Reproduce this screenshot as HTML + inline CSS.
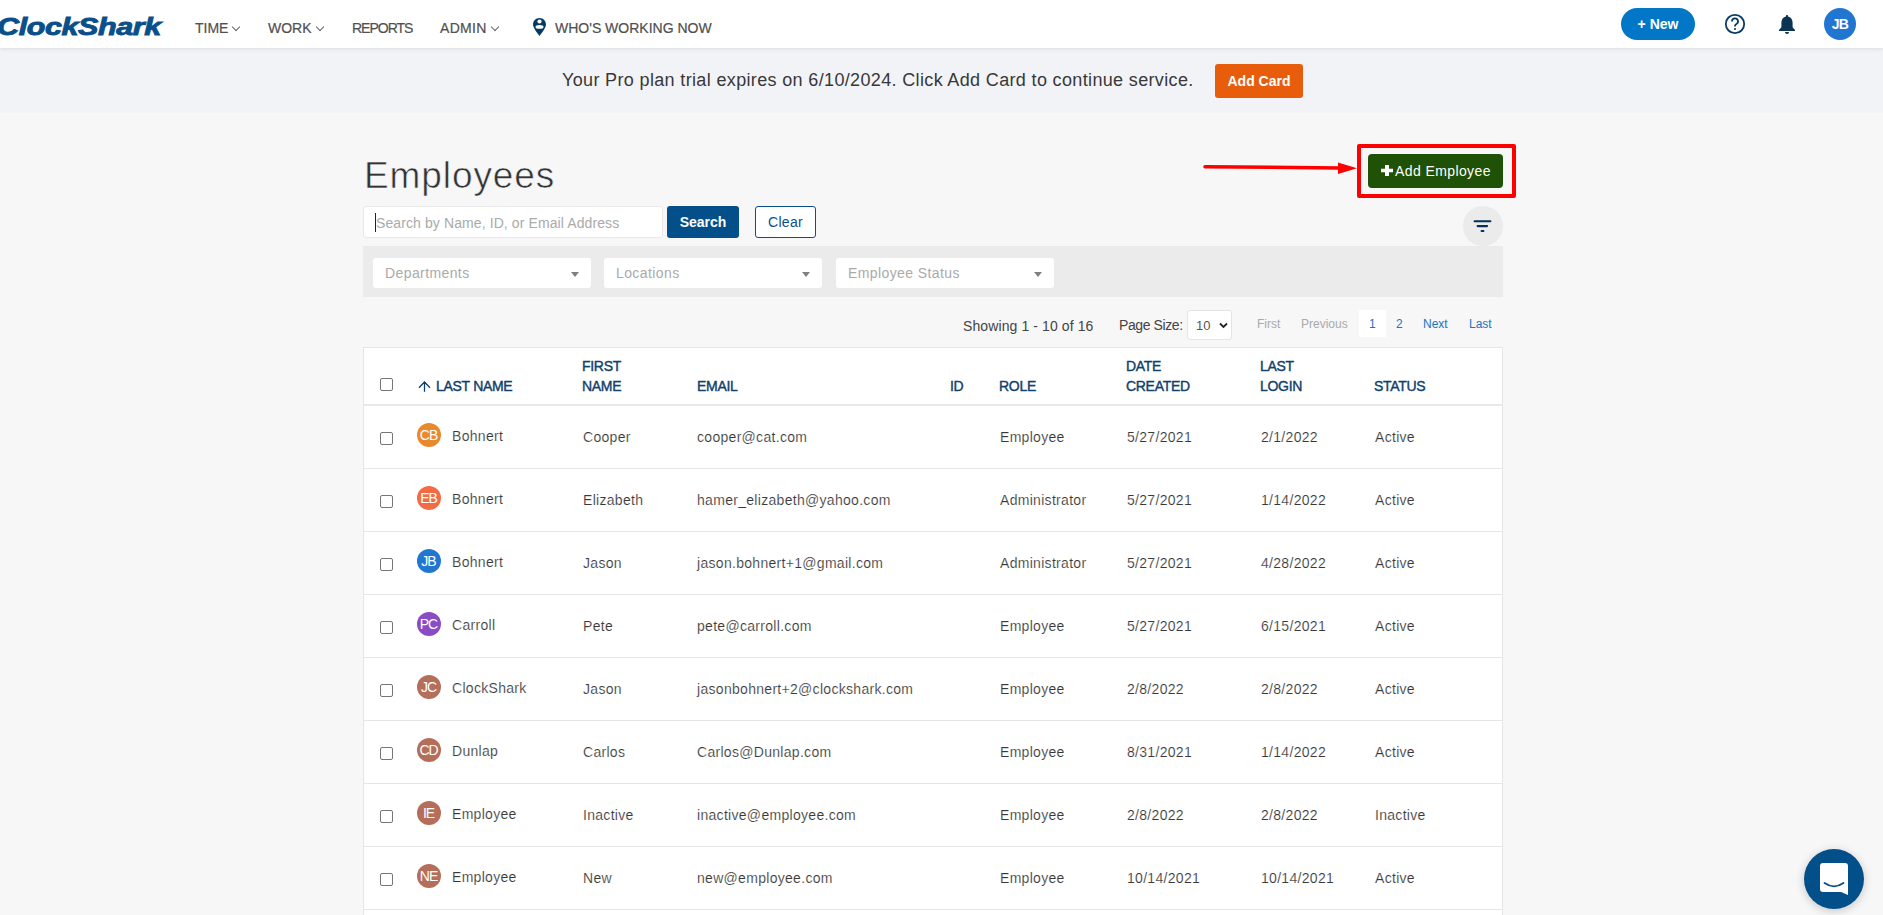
<!DOCTYPE html>
<html><head><meta charset="utf-8">
<style>
*{box-sizing:border-box;margin:0;padding:0}
html,body{width:1883px;height:915px;overflow:hidden}
body{position:relative;background:#f7f7f7;font-family:"Liberation Sans",sans-serif;color:#333}
.abs{position:absolute}
#hdr{position:absolute;left:0;top:0;width:1883px;height:48px;background:#fff;box-shadow:0 1px 4px rgba(0,0,0,.10);z-index:2}
.logo{position:absolute;left:-3px;top:12px;font-weight:bold;font-style:italic;font-size:24px;line-height:29px;color:#0b4f8a;letter-spacing:-0.3px;transform-origin:0 0;transform:scaleX(1.27);-webkit-text-stroke:0.9px #0b4f8a}
.nav{position:absolute;top:19.5px;font-size:14px;color:#505050;white-space:nowrap;line-height:17px;-webkit-text-stroke:0.2px #505050}
.chev{display:inline-block;width:6px;height:6px;border-right:1.2px solid #666;border-bottom:1.2px solid #666;transform:rotate(45deg);margin-left:5px;position:relative;top:-3px}
#banner{position:absolute;left:0;top:48px;width:1883px;height:65px;background:#f2f3f7}
.btxt{position:absolute;left:562px;top:69px;font-size:18px;color:#383838;white-space:nowrap;line-height:22px;letter-spacing:0.35px}
.addcard{position:absolute;left:1215px;top:64px;width:88px;height:34px;background:#e85d0c;border-radius:3px;color:#fff;font-weight:bold;font-size:14px;line-height:34px;text-align:center}
h1{position:absolute;left:364px;top:154px;font-weight:normal;font-size:37px;color:#333;letter-spacing:0.9px;line-height:44px;-webkit-text-stroke:0.6px #f7f7f7}
.inp{position:absolute;left:363px;top:206px;width:300px;height:32px;background:#fff;border:1px solid #e9e9e9;border-radius:3px}
.ph{position:absolute;left:12px;top:8px;font-size:14px;color:#aaa;line-height:17px;white-space:nowrap;letter-spacing:0.1px}
.caret{position:absolute;left:11px;top:6px;width:1px;height:19px;background:#222}
.sbtn{position:absolute;left:667px;top:206px;width:72px;height:32px;background:#034f8a;border-radius:3px;color:#fff;font-weight:bold;font-size:14px;line-height:33px;text-align:center}
.cbtn{position:absolute;left:755px;top:206px;width:61px;height:32px;background:#fff;border:1.3px solid #0b4f8a;border-radius:3px;color:#0b4f8a;font-size:14px;line-height:31px;text-align:center;letter-spacing:0.3px}
.addemp{position:absolute;left:1368px;top:154px;width:135px;height:34px;background:#1f5106;border-radius:4px;color:#fff;font-size:14px;line-height:34px;text-align:center;white-space:nowrap}
.redbox{position:absolute;left:1357px;top:144px;width:159px;height:54px;border:4px solid #f00;border-radius:2px}
.fcircle{position:absolute;left:1463px;top:206px;width:40px;height:40px;border-radius:50%;background:#ebebeb}
.fbar{position:absolute;left:363px;top:246px;width:1140px;height:51px;background:#ebebeb}
.dd{position:absolute;top:258px;width:218px;height:30px;background:#fff;border-radius:3px}
.dd span{position:absolute;left:12px;top:7px;font-size:14px;color:#aaa;line-height:17px;white-space:nowrap;letter-spacing:0.4px}
.dd i{position:absolute;right:12px;top:14px;width:0;height:0;border-left:4px solid transparent;border-right:4px solid transparent;border-top:5px solid #808080}
.pg{position:absolute;font-size:14px;color:#444;line-height:17px;white-space:nowrap}
.sel{position:absolute;left:1187px;top:310px;width:45px;height:30px;background:#fff;border:1px solid #e4e4e4;border-radius:3px}
.pl{position:absolute;top:317px;font-size:12px;line-height:15px;white-space:nowrap}
.tbl{position:absolute;left:363px;top:347px;width:1140px;height:600px;background:#fff;border:1px solid #e6e6e6}
.th{position:absolute;font-size:14px;font-weight:normal;color:#10406c;line-height:20px;white-space:nowrap;letter-spacing:-0.3px;-webkit-text-stroke:0.4px #10406c}
.hline{position:absolute;left:364px;width:1138px;height:1px;background:#e6e6e6}
.cb{position:absolute;left:380px;width:13px;height:13px;border:1px solid #767676;border-radius:2px;background:#fff}
.av{position:absolute;left:417px;width:24px;height:24px;border-radius:50%;color:#fff;font-size:14px;line-height:24px;text-align:center;letter-spacing:-1px;text-indent:-1px}
.td{position:absolute;font-size:14px;color:#383838;line-height:17px;white-space:nowrap;letter-spacing:0.3px;-webkit-text-stroke:0.15px #fff}
.chat{position:absolute;left:1804px;top:849px;width:60px;height:60px;border-radius:50%;background:#034f8a;box-shadow:0 2px 10px rgba(0,0,0,.2)}
</style></head>
<body>
<div id="hdr">
  <div class="logo">ClockShark</div>
  <div class="nav" style="left:195px">TIME<span class="chev"></span></div>
  <div class="nav" style="left:268px">WORK<span class="chev"></span></div>
  <div class="nav" style="left:352px;letter-spacing:-1px">REPORTS</div>
  <div class="nav" style="left:440px;letter-spacing:0.3px">ADMIN<span class="chev"></span></div>
  <svg class="abs" style="left:533px;top:18px" width="13" height="18" viewBox="0 0 13 18"><path d="M6.5 0C2.9 0 0 2.9 0 6.5c0 3.3 4.4 8.7 6.5 11.5C8.6 15.200 13 9.800 13 6.5 13 2.9 10.1 0 6.5 0z" fill="#063a66"/><circle cx="6.5" cy="3.500" r="2.100" fill="#fff"/><ellipse cx="6.5" cy="8.900" rx="4" ry="1.900" fill="#fff"/></svg>
  <div class="nav" style="left:555px">WHO'S WORKING NOW</div>
  <div class="abs" style="left:1621px;top:8px;width:74px;height:32px;border-radius:16px;background:#0277c8;color:#fff;font-weight:bold;font-size:14px;line-height:32px;text-align:center">+ New</div>
  <svg class="abs" style="left:1724px;top:13px" width="22" height="22" viewBox="0 0 22 22"><circle cx="11" cy="11" r="9.200" fill="none" stroke="#0b3a66" stroke-width="1.800"/><path d="M8 8.5a3 3 0 1 1 4.200 2.700c-.8.4-1.200.9-1.200 1.800v.6" fill="none" stroke="#0b3a66" stroke-width="1.8"/><circle cx="11" cy="16" r="1.1" fill="#0b3a66"/></svg>
  <svg class="abs" style="left:1778px;top:14px" width="18" height="21" viewBox="0 0 18 21"><path d="M9 1c.7 0 1 .4 1 1v.6c2.800.6 4.600 3 4.600 6v4.600L17 16v1H1v-1l2.400-2.800V8.600c0-3 1.800-5.400 4.600-6V2c0-.6.3-1 1-1z" fill="#0b3354"/><path d="M7 18h4a2 2 0 0 1-4 0z" fill="#0b3354"/></svg>
  <div class="abs" style="left:1824px;top:8px;width:32px;height:32px;border-radius:50%;background:#2176d2;color:#fff;font-weight:bold;font-size:14px;line-height:32px;text-align:center;letter-spacing:-0.6px">JB</div>
</div>
<div id="banner"></div>
<div class="btxt">Your Pro plan trial expires on 6/10/2024. Click Add Card to continue service.</div>
<div class="addcard">Add Card</div>

<h1>Employees</h1>
<div class="inp"><div class="caret"></div><div class="ph">Search by Name, ID, or Email Address</div></div>
<div class="sbtn">Search</div>
<div class="cbtn">Clear</div>

<svg class="abs" style="left:1200px;top:160px" width="160" height="16" viewBox="0 0 160 16"><path d="M5 6.700 L140 8" stroke="#f00" stroke-width="3.5" stroke-linecap="round"/><path d="M138 2.6 L157 8.3 L138 14 z" fill="#f00"/></svg>
<div class="redbox"></div>
<div class="addemp"><svg class="abs" style="left:13px;top:11px" width="12" height="11" viewBox="0 0 12 11"><path d="M4 0h4v3.8h4v3.4H8V11H4V7.2H0V3.8h4z" fill="#fff"/></svg><span class="abs" style="left:27px;top:0;letter-spacing:0.4px">Add Employee</span></div>
<div class="fcircle"><svg class="abs" style="left:10px;top:12px" width="20" height="16" viewBox="0 0 20 16"><path d="M1.600 3.200H17.400M4.600 8.100H14.100M8.600 13H10.400" stroke="#06305a" stroke-width="2.100" stroke-linecap="round"/></svg></div>

<div class="fbar"></div>
<div class="dd" style="left:373px"><span>Departments</span><i></i></div>
<div class="dd" style="left:604px"><span>Locations</span><i></i></div>
<div class="dd" style="left:836px"><span>Employee Status</span><i></i></div>

<div class="pg" style="left:963px;top:318px;letter-spacing:0.1px">Showing 1 - 10 of 16</div>
<div class="pg" style="left:1119px;top:317px;letter-spacing:-0.4px">Page Size:</div>
<div class="sel"><span class="abs" style="left:8px;top:7px;font-size:13px;color:#555;line-height:15px">10</span><svg class="abs" style="left:31px;top:11px" width="9" height="7" viewBox="0 0 9 7"><path d="M1 1.500 L4.500 5 L8 1.500" fill="none" stroke="#222" stroke-width="1.800"/></svg></div>
<div class="pl" style="left:1257px;color:#aaa">First</div>
<div class="pl" style="left:1301px;color:#aaa">Previous</div>
<div class="abs" style="left:1359px;top:310px;width:27px;height:27px;background:#fff"></div>
<div class="pl" style="left:1369px;color:#1a73c4">1</div>
<div class="pl" style="left:1396px;color:#1a73c4">2</div>
<div class="pl" style="left:1423px;color:#1a73c4">Next</div>
<div class="pl" style="left:1469px;color:#1a73c4">Last</div>

<div class="tbl"></div>
<div class="cb" style="top:378px"></div>
<svg class="abs" style="left:418px;top:380px" width="13" height="13" viewBox="0 0 13 13"><path d="M6.500 11.800V2.300M1 7.800l5.500-5.800 5.500 5.800" fill="none" stroke="#0b3a66" stroke-width="1.250"/></svg>
<div class="th" style="left:436px;top:376px">LAST NAME</div>
<div class="th" style="left:582px;top:356px">FIRST<br>NAME</div>
<div class="th" style="left:697px;top:376px">EMAIL</div>
<div class="th" style="left:950px;top:376px">ID</div>
<div class="th" style="left:999px;top:376px">ROLE</div>
<div class="th" style="left:1126px;top:356px">DATE<br>CREATED</div>
<div class="th" style="left:1260px;top:356px">LAST<br>LOGIN</div>
<div class="th" style="left:1374px;top:376px">STATUS</div>
<div class="hline" style="top:404px;height:2px;background:#e9e9e9"></div>
<!--ROWS-->
<div class="cb" style="top:432px"></div>
<div class="av" style="top:423px;background:#e8892f">CB</div>
<div class="td" style="left:452px;top:428px">Bohnert</div>
<div class="td" style="left:583px;top:429px">Cooper</div>
<div class="td" style="left:697px;top:429px">cooper@cat.com</div>
<div class="td" style="left:1000px;top:429px">Employee</div>
<div class="td" style="left:1127px;top:429px">5/27/2021</div>
<div class="td" style="left:1261px;top:429px">2/1/2022</div>
<div class="td" style="left:1375px;top:429px">Active</div>
<div class="hline" style="top:468px"></div>
<div class="cb" style="top:495px"></div>
<div class="av" style="top:486px;background:#f26b44">EB</div>
<div class="td" style="left:452px;top:491px">Bohnert</div>
<div class="td" style="left:583px;top:492px">Elizabeth</div>
<div class="td" style="left:697px;top:492px">hamer_elizabeth@yahoo.com</div>
<div class="td" style="left:1000px;top:492px">Administrator</div>
<div class="td" style="left:1127px;top:492px">5/27/2021</div>
<div class="td" style="left:1261px;top:492px">1/14/2022</div>
<div class="td" style="left:1375px;top:492px">Active</div>
<div class="hline" style="top:531px"></div>
<div class="cb" style="top:558px"></div>
<div class="av" style="top:549px;background:#2176d2">JB</div>
<div class="td" style="left:452px;top:554px">Bohnert</div>
<div class="td" style="left:583px;top:555px">Jason</div>
<div class="td" style="left:697px;top:555px">jason.bohnert+1@gmail.com</div>
<div class="td" style="left:1000px;top:555px">Administrator</div>
<div class="td" style="left:1127px;top:555px">5/27/2021</div>
<div class="td" style="left:1261px;top:555px">4/28/2022</div>
<div class="td" style="left:1375px;top:555px">Active</div>
<div class="hline" style="top:594px"></div>
<div class="cb" style="top:621px"></div>
<div class="av" style="top:612px;background:#8a4bc4">PC</div>
<div class="td" style="left:452px;top:617px">Carroll</div>
<div class="td" style="left:583px;top:618px">Pete</div>
<div class="td" style="left:697px;top:618px">pete@carroll.com</div>
<div class="td" style="left:1000px;top:618px">Employee</div>
<div class="td" style="left:1127px;top:618px">5/27/2021</div>
<div class="td" style="left:1261px;top:618px">6/15/2021</div>
<div class="td" style="left:1375px;top:618px">Active</div>
<div class="hline" style="top:657px"></div>
<div class="cb" style="top:684px"></div>
<div class="av" style="top:675px;background:#b46e5a">JC</div>
<div class="td" style="left:452px;top:680px">ClockShark</div>
<div class="td" style="left:583px;top:681px">Jason</div>
<div class="td" style="left:697px;top:681px">jasonbohnert+2@clockshark.com</div>
<div class="td" style="left:1000px;top:681px">Employee</div>
<div class="td" style="left:1127px;top:681px">2/8/2022</div>
<div class="td" style="left:1261px;top:681px">2/8/2022</div>
<div class="td" style="left:1375px;top:681px">Active</div>
<div class="hline" style="top:720px"></div>
<div class="cb" style="top:747px"></div>
<div class="av" style="top:738px;background:#b46e5a">CD</div>
<div class="td" style="left:452px;top:743px">Dunlap</div>
<div class="td" style="left:583px;top:744px">Carlos</div>
<div class="td" style="left:697px;top:744px">Carlos@Dunlap.com</div>
<div class="td" style="left:1000px;top:744px">Employee</div>
<div class="td" style="left:1127px;top:744px">8/31/2021</div>
<div class="td" style="left:1261px;top:744px">1/14/2022</div>
<div class="td" style="left:1375px;top:744px">Active</div>
<div class="hline" style="top:783px"></div>
<div class="cb" style="top:810px"></div>
<div class="av" style="top:801px;background:#b46e5a">IE</div>
<div class="td" style="left:452px;top:806px">Employee</div>
<div class="td" style="left:583px;top:807px">Inactive</div>
<div class="td" style="left:697px;top:807px">inactive@employee.com</div>
<div class="td" style="left:1000px;top:807px">Employee</div>
<div class="td" style="left:1127px;top:807px">2/8/2022</div>
<div class="td" style="left:1261px;top:807px">2/8/2022</div>
<div class="td" style="left:1375px;top:807px">Inactive</div>
<div class="hline" style="top:846px"></div>
<div class="cb" style="top:873px"></div>
<div class="av" style="top:864px;background:#b46e5a">NE</div>
<div class="td" style="left:452px;top:869px">Employee</div>
<div class="td" style="left:583px;top:870px">New</div>
<div class="td" style="left:697px;top:870px">new@employee.com</div>
<div class="td" style="left:1000px;top:870px">Employee</div>
<div class="td" style="left:1127px;top:870px">10/14/2021</div>
<div class="td" style="left:1261px;top:870px">10/14/2021</div>
<div class="td" style="left:1375px;top:870px">Active</div>
<div class="hline" style="top:909px"></div>
<!--/ROWS-->
<div class="chat"><svg class="abs" style="left:16px;top:14px" width="28" height="32" viewBox="0 0 28 32"><path d="M3 0h22a3 3 0 0 1 3 3v29l-7-3H3a3 3 0 0 1-3-3V3a3 3 0 0 1 3-3z" fill="#fff"/><path d="M4.500 20Q14 26.600 23.500 20" fill="none" stroke="#034f8a" stroke-width="1.800" stroke-linecap="round"/></svg></div>
</body></html>
